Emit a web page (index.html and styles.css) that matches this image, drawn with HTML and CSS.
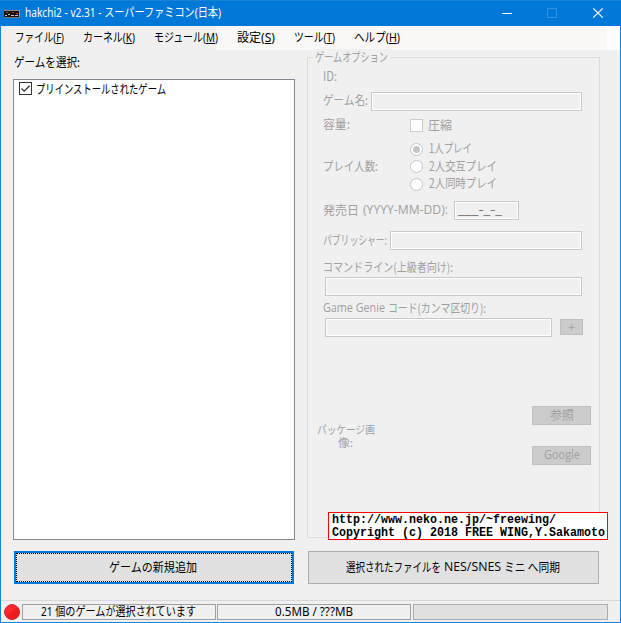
FILE: index.html
```html
<!DOCTYPE html>
<html lang="ja">
<head>
<meta charset="utf-8">
<title>hakchi2</title>
<link rel="stylesheet" href="styles.css">
</head>
<body>
<div class="window">
  <header class="titlebar">
    <svg class="app-icon" width="16" height="16" viewBox="0 0 16 16">
      <rect y="4" width="16" height="7" fill="#161010"/>
      <path d="M0 4.500h16" stroke="#8d8d8d"/>
      <path d="M2 6.500h2M8 6.500h2" stroke="#a33"/>
      <path d="M1 9.500h2m1-1h2m1 1h3m1 0h3" stroke="#ccc"/>
      <path d="M12 7.500h2" stroke="#d33"/>
      <path d="M0 11.500h16" stroke="#777"/>
      <path d="M15.500 5v6" stroke="#999"/>
    </svg>
    <span class="fit title" data-w="196">hakchi2 - v2.31 - スーパーファミコン(日本)</span>
    <svg class="controls" width="130" height="26" viewBox="0 0 130 26" fill="none">
      <path d="M10 13.500h10" stroke="#fff"/>
      <rect x="55.500" y="8.500" width="9" height="9" stroke="#3393df"/>
      <path d="M101.300 8.300l9.400 9.400M110.700 8.300l-9.400 9.400" stroke="#fff" stroke-width="1.200"/>
    </svg>
  </header>

  <nav class="menubar">
    <span class="fit" data-w="49">ファイル(<u>F</u>)</span>
    <span class="fit" data-w="52">カーネル(<u>K</u>)</span>
    <span class="fit" data-w="64">モジュール(<u>M</u>)</span>
    <span class="fit" data-w="38">設定(<u>S</u>)</span>
    <span class="fit" data-w="41">ツール(<u>T</u>)</span>
    <span class="fit" data-w="46">ヘルプ(<u>H</u>)</span>
  </nav>

  <main class="main">
    <section class="games">
      <div class="games-label"><span class="fit" data-w="66">ゲームを選択:</span></div>
      <div class="list">
        <div class="item">
          <svg width="13" height="13" viewBox="0 0 13 13" fill="none">
            <rect x=".5" y=".5" width="12" height="12" fill="#fff" stroke="#333"/>
            <path d="M2.500 6.500l2.700 2.700 5.500-5.500" stroke="#333" stroke-width="1.300"/>
          </svg>
          <span class="fit" data-w="130">プリインストールされたゲーム</span>
        </div>
      </div>
      <button class="action focused"><span class="fit" data-w="88">ゲームの新規追加</span></button>
    </section>

    <section class="side">
      <div class="group">
        <div class="legend"><span class="fit" data-w="73">ゲームオプション</span></div>
        <div class="row id"><span class="fit" data-w="14">ID:</span></div>
        <div class="row name"><span class="fit" data-w="45">ゲーム名:</span><div class="input"></div></div>
        <div class="row size">
          <span class="cell"><span class="fit" data-w="27">容量:</span></span>
          <i class="check"></i><span class="fit" data-w="24">圧縮</span>
        </div>
        <div class="row players">
          <span class="cell"><span class="fit" data-w="55">プレイ人数:</span></span>
          <div class="radios">
            <div class="option"><i class="radio on"></i><span class="fit" data-w="43">1人プレイ</span></div>
            <div class="option"><i class="radio"></i><span class="fit" data-w="68">2人交互プレイ</span></div>
            <div class="option"><i class="radio"></i><span class="fit" data-w="68">2人同時プレイ</span></div>
          </div>
        </div>
        <div class="row date"><div class="label"><span class="fit" data-w="36">発売日</span><span class="fit latin" data-w="85">(YYYY-MM-DD):</span></div><div class="input"><span class="fit latin" data-w="44">___-_-_</span></div></div>
        <div class="row publisher"><span class="fit" data-w="64">パブリッシャー:</span><div class="input"></div></div>
        <div class="row command"><span class="fit" data-w="130">コマンドライン(上級者向け):</span></div>
        <div class="row field"><div class="input"></div></div>
        <div class="row genie"><span class="fit latin" data-w="62">Game Genie</span><span class="fit" data-w="98">コード(カンマ区切り):</span></div>
        <div class="row field codes"><div class="input"></div><button class="off plus">+</button></div>
        <div class="row package">
          <div class="package-label"><span class="fit" data-w="58">パッケージ画</span><span class="fit" data-w="15">像:</span></div>
          <div class="package-buttons">
            <button class="off"><span class="fit" data-w="24">参照</span></button>
            <button class="off"><span class="fit latin" data-w="36">Google</span></button>
          </div>
        </div>
      </div>
      <button class="action sync"><span class="fit" data-w="95">選択されたファイルを</span><span class="fit latin" data-w="57">NES/SNES</span><span class="fit" data-w="56">ミニ へ同期</span></button>
    </section>
  </main>

  <footer class="status">
    <svg width="16" height="16" viewBox="0 0 16 16">
      <circle cx="8" cy="8" r="7.500" fill="#f92a2c" stroke="#c93a3c"/>
      <path d="M2 12L13 3A7 7 0 0 1 4 14z" fill="#ee1c1f"/>
    </svg>
    <div class="panel"><span class="fit" data-w="155">21 個のゲームが選択されています</span></div>
    <div class="panel"><span class="fit" data-w="78">0.5MB / ???MB</span></div>
    <div class="progress"></div>
  </footer>

  <div class="credit">
    <div><span class="fit" data-w="224">http://www.neko.ne.jp/~freewing/</span></div>
    <div><span class="fit" data-w="273">Copyright (c) 2018 FREE WING,Y.Sakamoto</span></div>
  </div>
</div>
<script src="fit.js"></script>
</body>
</html>
```
FILE: styles.css
```css
* { box-sizing: border-box; }
body {
  margin: 0;
  font: 12.5px/16px "Noto Sans CJK JP", sans-serif;
  color: #000;
}
button { font: inherit; color: inherit; padding: 0; border-radius: 0; }
.fit {
  display: inline-block;
  flex: none;
  white-space: nowrap;
  transform-origin: 0 50%;
}
.latin { font-family: "Open Sans", sans-serif; font-size: 12px; }
.window {
  position: relative;
  width: 621px;
  height: 623px;
  display: flex;
  flex-direction: column;
  background: #f0f0f0;
  border: 1px solid #1883d7;
  border-top: 0;
}
.titlebar {
  height: 26px;
  margin: 0 -1px;
  display: flex;
  align-items: center;
  padding-left: 4px;
  background: #0078d7;
  border-top: 1px solid #1883d7;
  color: #fff;
}
.title {
  margin: -1px 0 0 5px;
  font-family: "Noto Sans", "Noto Sans CJK JP", sans-serif;
}
.controls { margin: -1px -1px 0 auto; }
.menubar {
  height: 24px;
  display: flex;
  align-items: center;
  gap: 19px;
  padding-left: 14px;
  font-family: "Noto Sans", "Noto Sans CJK JP", sans-serif;
  background: linear-gradient(90deg, #f0f0f0 215px, #f9f8f7 215px 606px, #fdfdfd 606px);
}
.menubar u { text-underline-offset: 1px; }
.main {
  flex: 1;
  display: flex;
  gap: 12px;
  padding-left: 12px;
}
.games { width: 282px; display: flex; flex-direction: column; }
.games-label { height: 29px; padding: 4px 0 0 1px; }
.list {
  height: 461px;
  padding: 2px 5px;
  background: #fff;
  border: 1px solid #828790;
}
.item { display: flex; align-items: center; gap: 4px; height: 13px; }
.action {
  display: flex;
  align-items: center;
  justify-content: center;
  height: 33px;
  padding: 0 1px 2px 0;
  background: #e1e1e1;
  border: 1px solid #adadad;
}
.sync { gap: 3px; }
.focused {
  margin: 11px 1px 0;
  padding-right: 2px;
  border: 2px solid #0078d7;
  outline: 1px dotted #000;
  outline-offset: -3px;
}
.side { width: 293px; padding-top: 7px; display: flex; flex-direction: column; }
.side .action { margin: 13px 1px 0; }
.group {
  height: 481px;
  border: 1px solid #dcdcdc;
  padding-left: 15px;
  color: #a0a0a0;
}
.legend {
  width: 78px;
  height: 17px;
  margin: -9px 0 0 -10px;
  padding-left: 2px;
  background: #f0f0f0;
}
.row { display: flex; align-items: center; }
.row > .fit, .cell .fit, .option .fit, .label { position: relative; top: -1px; }
.name > .fit { top: -2px; }
.size > .fit, .command > .fit, .genie > .fit { top: 0; }
.input {
  height: 19px;
  border: 1px solid #c8c8c8;
  box-shadow: inset 0 0 0 1px #fff;
  display: flex;
  align-items: center;
}
.id { height: 18px; margin-top: 2px; }
.name { height: 19px; margin-top: 6px; gap: 3px; }
.name .input { width: 211px; }
.size { height: 18px; margin-top: 5px; }
.cell { width: 87px; flex: none; }
.check { width: 13px; height: 13px; margin-right: 5px; background: #fff; border: 1px solid #ccc; }
.players { height: 53px; margin-top: 6px; }
.radios { display: flex; flex-direction: column; }
.option { height: 17.500px; display: flex; align-items: center; gap: 6px; }
.radio {
  width: 13px;
  height: 13px;
  border: 1px solid #c4c4c4;
  border-radius: 50%;
  background: #fff;
}
.radio.on { background: radial-gradient(circle, #c4c4c4 3px, #fff 4px); }
.date { height: 19px; margin-top: 8px; gap: 6px; }
.label { display: flex; align-items: center; gap: 4px; }
.date .input { width: 65px; padding: 0 0 2px 3px; color: #6d6d6d; }
.publisher { height: 19px; margin-top: 11px; gap: 3px; }
.publisher .input { width: 192px; }
.command { height: 18px; margin-top: 8px; }
.field { height: 19px; margin-top: 1px; padding-left: 2px; }
.field .input { width: 257px; }
.genie { height: 18px; margin-top: 3px; gap: 3px; }
.codes { gap: 8px; }
.codes .input { width: 227px; }
.off {
  display: flex;
  align-items: center;
  justify-content: center;
  width: 59px;
  height: 19px;
  padding-bottom: 2px;
  background: #ccc;
  border: 1px solid #bfbfbf;
}
.plus { width: 23px; height: 16px; margin-top: -1px; padding-bottom: 0; }
.package { height: 59px; margin-top: 69px; margin-left: -7px; }
.package-label {
  width: 59px;
  display: flex;
  flex-direction: column;
  align-items: center;
  font-size: 11px;
  line-height: 13px;
}
.package-buttons { margin-left: 157px; display: flex; flex-direction: column; gap: 21px; }
.status {
  height: 22px;
  display: flex;
  align-items: center;
  padding-left: 3px;
  border-top: 1px solid #d7d7d7;
  font-family: "Noto Sans", "Noto Sans CJK JP", sans-serif;
}
.panel, .progress {
  width: 194px;
  height: 16px;
  border: 1px solid #a0a0a0;
  display: flex;
  align-items: center;
  justify-content: center;
}
.panel { padding-right: 1px; }
.status svg { margin-right: 2px; }
.panel + .panel { margin-left: 1px; }
.progress { width: 195px; margin-left: 2px; background: #e1e1e1; border-color: #adadad; }
.credit {
  position: absolute;
  left: 327px;
  top: 512px;
  width: 280px;
  height: 28px;
  padding: 1px 0 0 3px;
  background: #fff;
  border: 1px solid #f00;
  font: bold 12px/13px "Liberation Mono", monospace;
}
.credit div { height: 13px; }
```
FILE: fit.js
```js
// Condenses each label to its column width and keeps the flow in step.
document.querySelectorAll('.fit').forEach(function (el) {
  var want = Number(el.dataset.w);
  var have = el.getBoundingClientRect().width;
  el.style.transform = 'scaleX(' + want / have + ')';
  var diff = want - have;
  el.style.marginRight = diff + 'px';
});
```
